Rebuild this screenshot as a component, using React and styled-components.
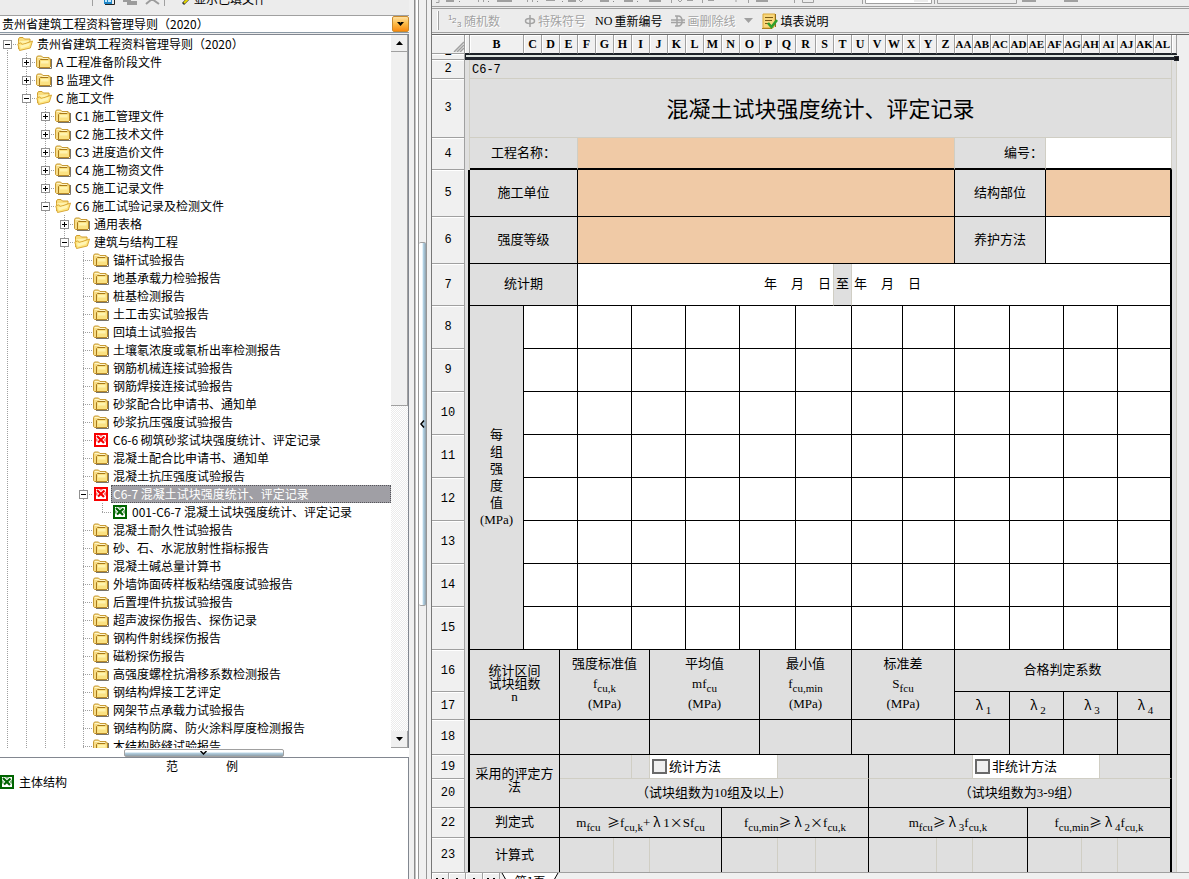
import React, { useState } from 'react'
import styled, { createGlobalStyle, css } from 'styled-components'

const GlobalStyle = createGlobalStyle`
  * { box-sizing: border-box; }
  body {
    margin: 0;
    background-color: #ececec;
    color: #000;
    font: 12px/18px "Noto Sans CJK SC", "Noto Sans", sans-serif;
  }
  button, select, input { font: inherit; color: inherit; margin: 0; padding: 0; border: 0; background: none; }
`;

const App_ = styled.div`
  display: flex;
  height: 100vh;
  overflow: hidden;
`;

const Side = styled.aside`
  flex: none;
  width: 409px;
  display: flex;
  flex-direction: column;
`;

const SideTools = styled.div`
  height: 15px;
  padding-left: 92px;
  display: flex;
  align-items: flex-start;
  overflow: hidden;
`;

const SideToolsText = styled.span`
  height: 5px;
  margin-left: 2px;
  display: flex;
  align-items: flex-end;
  overflow: hidden;
  line-height: 13px;
`;

const Combo = styled.div`
  flex: none;
  height: 18px;
  display: flex;
  background-color: #fff;
  border-top: 1px solid #a0a0a0;
  border-bottom: 1px solid #8c9aa6;
`;

const Select = styled.select`
  flex: 1;
  appearance: none;
  padding-left: 2px;
  line-height: 16px;
  outline: none;
`;

const ComboArrow = styled.span`
  width: 17px;
  display: flex;
  align-items: center;
  justify-content: center;
  border: 1px solid #c98a2c;
  border-radius: 2px;
  background: linear-gradient(#ffe0a0, #fdb944 50%, #f98a10);
`;

const TreePanel = styled.div`
  flex: 1;
  min-height: 0;
  margin-top: 1px;
  display: flex;
  background-color: #fff;
  border-top: 1px solid #828790;
  border-right: 1px solid #828790;
`;

const Tree = styled.ul`
  flex: 1;
  margin: 0;
  padding: 0;
  list-style: none;
  overflow: hidden;
`;

const TreeRow = styled.li`
  height: 18px;
  display: flex;
  align-items: stretch;
`;

const dots = '#a0a0a0 0 1px, transparent 1px 2px';

const Guide = styled.span`
  flex: none;
  width: 19px;
  background: repeating-linear-gradient(to bottom, ${dots}) 7px 0 / 1px 100% no-repeat;
`;

const Branch = styled.span`
  flex: none;
  width: 17px;
  padding-left: 3px;
  display: flex;
  align-items: center;
  background:
    repeating-linear-gradient(to bottom, ${dots}) 7px ${p => p.$first ? '9px' : '0'} / 1px ${p => p.$last ? '50%' : '100%'} no-repeat,
    repeating-linear-gradient(to right, ${dots}) 7px 9px / 10px 1px no-repeat;
`;

const Expander = styled.button`
  width: 9px;
  height: 9px;
  display: flex;
  background-color: #fff;
  border: 1px solid #919191;
`;

const Label = styled.button`
  flex: 1;
  margin-left: 2px;
  padding-left: 1px;
  text-align: left;
  line-height: 16px;
  white-space: nowrap;
  border: 1px solid transparent;
  ${p => p.$selected && css`
    color: #fff;
    background-color: #a09fa5;
    border: 1px dotted #55555a;
  `}
`;

const ScrollBar = styled.div`
  flex: none;
  width: 17px;
  display: flex;
  flex-direction: column;
  background: repeating-conic-gradient(#ebebeb 0 25%, #fff 0 50%) 0 0 / 2px 2px;
`;

const ScrollButton = styled.button`
  height: 17px;
  display: flex;
  align-items: center;
  justify-content: center;
  background-color: #f0f0f0;
  border-right: 1px solid #a0a0a0;
  border-bottom: 1px solid #a0a0a0;
`;

const Thumb = styled.div`
  flex: 0 0 354px;
  background-color: #f0f0f0;
  border-right: 1px solid #a0a0a0;
  border-bottom: 1px solid #a0a0a0;
`;

const ScrollSpace = styled.div`
  flex: 1;
`;

const HSplit = styled.div`
  flex: none;
  height: 9px;
  padding-right: 2px;
  display: flex;
  justify-content: center;
  align-items: flex-end;
  background-color: #fff;
`;

const HHandle = styled.button`
  width: 160px;
  height: 8px;
  display: flex;
  justify-content: center;
  align-items: center;
  border: 1px solid #a0a0a0;
  border-radius: 2px;
  background: linear-gradient(#fff 35%, #b4d2e4 50%, #8f9ea8);
`;

const Samples = styled.section`
  flex: none;
  height: 122px;
  background-color: #fff;
  border-top: 1px solid #828790;
  border-right: 1px solid #828790;
`;

const SamplesHead = styled.div`
  height: 16px;
  padding-right: 4px;
  line-height: 16px;
  display: flex;
  justify-content: center;
  gap: 48px;
`;

const SampleItem = styled.button`
  height: 16px;
  display: flex;
  align-items: center;
  gap: 5px;
`;

const VSplit = styled.div`
  flex: none;
  width: 22px;
  padding: 0 4px 0 5px;
  display: flex;
  background-color: #f0f0f0;
`;

const Edge = styled.span`
  width: 4px;
  border-left: 1px solid #8c8c8c;
  background: linear-gradient(to right, #c4c4c4 1px, #fff 1px);
`;

const Rail = styled.div`
  width: 10px;
  padding-bottom: 31px;
  display: flex;
  flex-direction: column;
  justify-content: center;
  border-left: 1px solid #969696;
  border-right: 1px solid #969696;
`;

const VHandle = styled.button`
  height: 43%;
  display: flex;
  align-items: center;
  justify-content: center;
  border: solid #a0a0a0;
  border-width: 1px 0;
  border-radius: 2px;
  background: linear-gradient(to right, #fff 45%, #b4d6ea 60%, #8f9ea8);
`;

const Main = styled.main`
  flex: 1;
  min-width: 0;
  display: flex;
  flex-direction: column;
  border-left: 1px solid #777;
`;

const TopStrip = styled.div`
  flex: none;
  height: 7px;
  display: flex;
  align-items: flex-start;
  overflow: hidden;
  border-bottom: 1px solid #a0a0a0;
`;

const ToolBar = styled.div`
  flex: none;
  height: 25px;
  margin-top: 1px;
  padding-left: 5px;
  display: flex;
  align-items: center;
  gap: 9px;
  white-space: nowrap;
  border-top: 1px solid #a0a0a0;
  border-bottom: 1px solid #a0a0a0;
`;

const Grip = styled.span`
  width: 2px;
  height: 19px;
  border-right: 1px solid #a0a0a0;
  background-color: #fff;
`;

const Tool = styled.button`
  display: flex;
  align-items: center;
  gap: 2px;
  margin-right: ${p => p.$wide ? '15px' : '0'};
  color: #000;
  &:disabled { color: #a3a3a3; text-shadow: 1px 1px 0 #fff; }
`;

const No = styled.span`
  font: 12px/16px "Liberation Serif", serif;
`;

const SheetArea = styled.div`
  flex: 1;
  min-height: 0;
  margin-top: 1px;
  overflow: hidden;
  background-color: #efefef;
  border-top: 1px solid #696969;
`;

const Sheet = styled.table`
  width: 745px;
  table-layout: fixed;
  border-collapse: separate;
  border-spacing: 0;
  font: 13px/13px "Liberation Serif", "Noto Sans CJK SC", serif;
`;

const lines = {
  dark: '1px solid #000',
  thick: '2px solid #000',
  light: '1px solid #d0cec4',
  none: '0',
};
const fills = { grey: '#dfdfdf', white: '#fff', orange: '#f0caa6' };

const Td = styled.td`
  padding: ${p => p.$pad || '0 0 2px'};
  text-align: ${p => p.$align || 'center'};
  vertical-align: middle;
  line-height: ${p => p.$lh || 13}px;
  background-color: ${p => fills[p.$fill || 'grey']};
  border-right: ${p => lines[p.$right || 'dark']};
  border-bottom: ${p => lines[p.$bottom || 'dark']};
`;

const ColHead = styled.th`
  height: 19px;
  padding: 0;
  font: bold ${p => p.$double ? 11 : 12}px/16px "Liberation Serif", serif;
  white-space: nowrap;
  background-color: #f0f0f0;
  border-right: 1px solid #a0a0a0;
  border-bottom: 1px solid #1d2228;
  box-shadow: inset 1px 1px 0 #fff;
`;

const RowHead = styled.th`
  height: ${p => p.$h}px;
  padding: 0;
  font: 12px/14px "Liberation Mono", monospace;
  vertical-align: middle;
  background-color: #f0f0f0;
  border-right: 1px solid #a0a0a0;
  border-bottom: 1px solid #a0a0a0;
  box-shadow: inset 0 1px 0 #fff;
`;

const Peek = styled.div`
  height: 5px;
  display: flex;
  align-items: flex-end;
  justify-content: center;
  overflow: hidden;
`;

const Band = styled.td`
  position: relative;
  padding: 0;
  background-color: #dde3df;
  border-top: 1px solid #1d2228;
  border-bottom: 3px solid #20242c;
  border-left: 1px solid #1d2228;
`;

const FillHandle = styled.span`
  position: absolute;
  right: -2px;
  bottom: -4px;
  width: 5px;
  height: 5px;
  background-color: #111;
  border: 1px solid #20242c;
`;

const Title = styled.div`
  font: 22px/30px "Noto Sans CJK SC", sans-serif;
`;

const Code = styled.span`
  font: 12px/14px "Liberation Mono", monospace;
`;

const Sub = styled.sub`
  font-size: 11px;
  line-height: 0;
`;

const Wide = styled.span`
  display: inline-block;
  width: 13px;
  text-align: center;
  font-family: "Noto Sans CJK SC", sans-serif;
`;

const DateParts = styled.div`
  display: flex;
  gap: 14px;
  justify-content: ${p => p.$end ? 'flex-end' : 'flex-start'};
`;

const Check = styled.label`
  display: flex;
  align-items: center;
  gap: 2px;
`;

const CheckBox = styled.input`
  appearance: none;
  width: 15px;
  height: 15px;
  background-color: #efefef;
  border: 2px solid #696969;
  &:checked { background-color: #696969; }
`;

const TabBar = styled.div`
  flex: none;
  height: 7px;
  display: flex;
  overflow: hidden;
  background-color: #f0f0f0;
  border-top: 1px solid #a0a0a0;
`;

const NavButton = styled.button`
  width: 17px;
  height: 17px;
  display: flex;
  justify-content: center;
  border-right: 1px solid #a0a0a0;
  box-shadow: inset 1px 1px 0 #fff;
`;

const TabEdge = styled.svg`
  flex: none;
  display: block;
`;

const Tab = styled.button`
  height: 16px;
  width: 48px;
  line-height: 14px;
  background-color: #fff;
`;

const FolderIcon = () => (
  <svg width="16" height="16" viewBox="0 0 16 16">
    <path d="M3 14.500h12.500V5" fill="none" stroke="#77736a" />
    <path d="M.5 12.500v-9l1-1.500h4l1.500 1.500h6l1 1v8l-1 1h-11.500z" fill="#f7dc86" stroke="#c79a35" />
    <path d="M2 3.500h3.500l1 1H12" stroke="#fff6c9" fill="none" />
    <path d="M4 13V6.500L5 5.500h8.500l.5 1V13z" fill="#fbe282" />
    <path d="M3.500 13V6.500l1-1h7.500l1-1" fill="none" stroke="#a8791a" />
    <path d="M5 7h7.500v2.500H5z" fill="#fff3ae" />
    <path d="M2 13.500h12M14.500 5v8" stroke="#b98a28" />
  </svg>
)

const OpenFolderIcon = () => (
  <svg width="16" height="16" viewBox="0 0 16 16">
    <path d="M1.500 13V3l1-1.500h3.500l1.500 1.500h5.500v3" fill="#f9dd7c" stroke="#d3a02c" />
    <path d="M1 6l3-1 9-.5-4 3z" fill="#fff3ae" />
    <path d="M2.500 14.500L.8 8l2.700-1 2 1.500L15.500 5l-2.200 7z" fill="#ffe67f" stroke="#d9a93a" />
    <path d="M3 9.500l10-2.500-1 3-8 2.500z" fill="#fff5b5" />
  </svg>
)

const SheetIcon = ({ color }) => (
  <svg width="14" height="14" viewBox="0 0 14 14" style={{ flexShrink: 0 }}>
    <rect width="14" height="14" fill={color} />
    <path d="M2 2h10v10H2z" fill="#fff" />
    <path d="M3 3l7 7M10.500 3.500L4 9.500" stroke={color} strokeWidth="2.200" />
    <path d="M2 5l2 2-2 2M12 4.500L9.500 7l2.500 2M5 2l2 2 2-2" fill={color} fillOpacity=".55" />
    <path d="M2 11.500h10" stroke="#fff" />
  </svg>
)

const IconBox = styled.span`
  flex: none;
  width: 16px;
  display: flex;
  align-items: center;
  justify-content: center;
`;

const TreeIcon = ({ type }) => (
  <IconBox>
    {type === 'open' && <OpenFolderIcon />}
    {type === 'folder' && <FolderIcon />}
    {type === 'red' && <SheetIcon color="#f80000" />}
    {type === 'green' && <SheetIcon color="#006400" />}
  </IconBox>
)

const Arrow = ({ d, w = 7, h = 4, color = '#000' }) => (
  <svg width={w} height={h} viewBox={`0 0 ${w} ${h}`}><path d={d} fill={color} /></svg>
)

// level, icon, text, expander sign
const tree = [
  [0, 'open', '贵州省建筑工程资料管理导则（2020）', '-'],
  [1, 'folder', 'A 工程准备阶段文件', '+'],
  [1, 'folder', 'B 监理文件', '+'],
  [1, 'open', 'C 施工文件', '-'],
  [2, 'folder', 'C1 施工管理文件', '+'],
  [2, 'folder', 'C2 施工技术文件', '+'],
  [2, 'folder', 'C3 进度造价文件', '+'],
  [2, 'folder', 'C4 施工物资文件', '+'],
  [2, 'folder', 'C5 施工记录文件', '+'],
  [2, 'open', 'C6 施工试验记录及检测文件', '-'],
  [3, 'folder', '通用表格', '+'],
  [3, 'open', '建筑与结构工程', '-'],
  [4, 'folder', '锚杆试验报告'],
  [4, 'folder', '地基承载力检验报告'],
  [4, 'folder', '桩基检测报告'],
  [4, 'folder', '土工击实试验报告'],
  [4, 'folder', '回填土试验报告'],
  [4, 'folder', '土壤氡浓度或氡析出率检测报告'],
  [4, 'folder', '钢筋机械连接试验报告'],
  [4, 'folder', '钢筋焊接连接试验报告'],
  [4, 'folder', '砂浆配合比申请书、通知单'],
  [4, 'folder', '砂浆抗压强度试验报告'],
  [4, 'red', 'C6-6 砌筑砂浆试块强度统计、评定记录'],
  [4, 'folder', '混凝土配合比申请书、通知单'],
  [4, 'folder', '混凝土抗压强度试验报告'],
  [4, 'red', 'C6-7 混凝土试块强度统计、评定记录', '-'],
  [5, 'green', '001-C6-7 混凝土试块强度统计、评定记录'],
  [4, 'folder', '混凝土耐久性试验报告'],
  [4, 'folder', '砂、石、水泥放射性指标报告'],
  [4, 'folder', '混凝土碱总量计算书'],
  [4, 'folder', '外墙饰面砖样板粘结强度试验报告'],
  [4, 'folder', '后置埋件抗拔试验报告'],
  [4, 'folder', '超声波探伤报告、探伤记录'],
  [4, 'folder', '钢构件射线探伤报告'],
  [4, 'folder', '磁粉探伤报告'],
  [4, 'folder', '高强度螺栓抗滑移系数检测报告'],
  [4, 'folder', '钢结构焊接工艺评定'],
  [4, 'folder', '网架节点承载力试验报告'],
  [4, 'folder', '钢结构防腐、防火涂料厚度检测报告'],
  [4, 'folder', '木结构胶缝试验报告'],
]

const letters = 'A B C D E F G H I J K L M N O P Q R S T U V W X Y Z AA AB AC AD AE AF AG AH AI AJ AK AL AM'.split(' ')
const narrow = { A: 5, B: 54, O: 20, R: 20, U: 17, V: 17, W: 17, X: 17, Y: 17, AC: 19, AM: 5 }

const Row = ({ n, h, framed = true, children }) => (
  <tr>
    <RowHead $h={h} scope="row">{n}</RowHead>
    <Td $right={framed ? 'thick' : 'light'} $bottom="none" />
    {children}
    <Td $right="light" $bottom="none" />
  </tr>
)

const Fcu = ({ children = 'cu,k' }) => <>f<Sub>{children}</Sub></>
const Lambda = ({ n }) => <><Wide>λ</Wide><Sub>{n}</Sub></>
const Ge = () => <Wide>≥</Wide>

const MethodCheck = ({ id, text }) => (
  <Check htmlFor={id}>
    <CheckBox type="checkbox" id={id} />
    {text}
  </Check>
)

const FormSheet = () => (
  <Sheet>
    <colgroup>
      <col width="33" />
      {letters.map(l => <col key={l} width={narrow[l] || 18} />)}
    </colgroup>
    <thead>
      <tr>
        <RowHead $h={19}>
          <svg width="32" height="16" viewBox="0 0 32 16" style={{ display: 'block' }}>
            <path d="M22 16L32 6M25 16l7-7M28 16l4-4" stroke="#a0a0a0" strokeWidth="1.500" />
          </svg>
        </RowHead>
        {letters.map(l => (
          <ColHead key={l} scope="col" $double={l.length > 1}>{l === 'A' || l === 'AM' ? '' : l}</ColHead>
        ))}
      </tr>
    </thead>
    <tbody>
      <tr>
        <RowHead $h={6} scope="row"><Peek>1</Peek></RowHead>
        <Band colSpan={39}><FillHandle /></Band>
      </tr>
      <Row n={2} h={19} framed={false}>
        <Td colSpan={37} $align="left" $pad="0 2px" $right="light" $bottom="light"><Code>C6-7</Code></Td>
      </Row>
      <Row n={3} h={59} framed={false}>
        <Td colSpan={37} $right="light" $bottom="light"><Title>混凝土试块强度统计、评定记录</Title></Td>
      </Row>
      <Row n={4} h={32} framed={false}>
        <Td colSpan={4} $right="light" $bottom="thick">工程名称：</Td>
        <Td colSpan={21} $fill="orange" $right="light" $bottom="thick" />
        <Td colSpan={5} $align="right" $pad="0 2px 2px" $right="light" $bottom="thick">编号：</Td>
        <Td colSpan={7} $fill="white" $right="light" $bottom="thick" />
      </Row>
      <Row n={5} h={47}>
        <Td colSpan={4}>施工单位</Td>
        <Td colSpan={21} $fill="orange" />
        <Td colSpan={5}>结构部位</Td>
        <Td colSpan={7} $fill="orange" $right="thick" />
      </Row>
      <Row n={6} h={47}>
        <Td colSpan={4}>强度等级</Td>
        <Td colSpan={21} $fill="orange" />
        <Td colSpan={5}>养护方法</Td>
        <Td colSpan={7} $fill="white" $right="thick" />
      </Row>
      <Row n={7} h={42}>
        <Td colSpan={4}>统计期</Td>
        <Td colSpan={14} $fill="white" $right="light" $pad="0 2px 2px">
          <DateParts $end><span>年</span><span>月</span><span>日</span></DateParts>
        </Td>
        <Td $right="light">至</Td>
        <Td colSpan={18} $fill="white" $right="thick" $pad="0 2px 2px">
          <DateParts><span>年</span><span>月</span><span>日</span></DateParts>
        </Td>
      </Row>
      {[8, 9, 10, 11, 12, 13, 14, 15].map(n => (
        <Row key={n} n={n} h={43}>
          {n === 8 && <Td rowSpan={8} $lh={17}>每<br />组<br />强<br />度<br />值<br />(MPa)</Td>}
          {Array.from({ length: 12 }, (_, i) => (
            <Td key={i} colSpan={3} $fill="white" $right={i === 11 ? 'thick' : 'dark'} />
          ))}
        </Row>
      ))}
      <Row n={16} h={42}>
        <Td colSpan={3} rowSpan={2}>统计区间<br />试块组数<br />n</Td>
        <Td colSpan={5} rowSpan={2} $lh={20}>强度标准值<br /><Fcu /><br />(MPa)</Td>
        <Td colSpan={6} rowSpan={2} $lh={20}>平均值<br />m<Fcu>cu</Fcu><br />(MPa)</Td>
        <Td colSpan={5} rowSpan={2} $lh={20}>最小值<br /><Fcu>cu,min</Fcu><br />(MPa)</Td>
        <Td colSpan={6} rowSpan={2} $lh={20}>标准差<br />S<Sub>fcu</Sub><br />(MPa)</Td>
        <Td colSpan={12} $right="thick">合格判定系数</Td>
      </Row>
      <Row n={17} h={28}>
        {[1, 2, 3, 4].map(i => (
          <Td key={i} colSpan={3} $right={i === 4 ? 'thick' : 'dark'}><Lambda n={i} /></Td>
        ))}
      </Row>
      <Row n={18} h={35}>
        {[3, 5, 6, 5, 6, 3, 3, 3].map((s, i) => <Td key={i} colSpan={s} />)}
        <Td colSpan={3} $right="thick" />
      </Row>
      <Row n={19} h={24}>
        <Td colSpan={3} rowSpan={2}>采用的评定方法</Td>
        <Td colSpan={4} $right="light" $bottom="light" />
        <Td $right="light" $bottom="light" />
        <Td colSpan={7} $fill="white" $right="light" $bottom="light" $pad="0 2px">
          <MethodCheck id="stat" text="统计方法" />
        </Td>
        <Td colSpan={5} $bottom="light" />
        <Td colSpan={6} $right="light" $bottom="light" />
        <Td colSpan={7} $fill="white" $right="light" $bottom="light" $pad="0 2px">
          <MethodCheck id="nonstat" text="非统计方法" />
        </Td>
        <Td colSpan={4} $right="thick" $bottom="light" />
      </Row>
      <Row n={20} h={29}>
        <Td colSpan={17}>（试块组数为10组及以上）</Td>
        <Td colSpan={17} $right="thick">（试块组数为3-9组）</Td>
      </Row>
      <Row n={22} h={30}>
        <Td colSpan={3}>判定式</Td>
        <Td colSpan={9}>m<Sub>fcu</Sub>&nbsp; <Ge /><Fcu />+<Wide>λ</Wide>1<Wide>×</Wide>S<Fcu>cu</Fcu></Td>
        <Td colSpan={8}><Fcu>cu,min</Fcu><Ge /><Lambda n={2} /><Wide>×</Wide><Fcu /></Td>
        <Td colSpan={9}>m<Sub>fcu</Sub><Ge /><Lambda n={3} /><Fcu /></Td>
        <Td colSpan={8} $right="thick"><Fcu>cu,min</Fcu><Ge /><Lambda n={4} /><Fcu /></Td>
      </Row>
      <Row n={23} h={35}>
        <Td colSpan={3}>计算式</Td>
        {[[3, 2, 4], [3, 2, 3], [4, 2, 3], [3, 2, 3]].map((group, g) => group.map((s, i) => (
          <Td key={`${g}-${i}`} colSpan={s} $right={i < 2 ? 'light' : g === 3 ? 'thick' : 'dark'} />
        )))}
      </Row>
    </tbody>
  </Sheet>
)

const App = () => {
  const [selected, setSelected] = useState(25)

  return (
    <>
      <GlobalStyle />
      <App_>
        <Side>
          <SideTools>
            <svg width="100" height="6" viewBox="0 0 100 6">
              <path d="M.5 0v6M72.500 0v6" stroke="#a0a0a0" />
              <path d="M12 0h8v4h-8z" fill="#1f86c7" />
              <path d="M13 0h2v2h-2zM16 0h3v2h-3z" fill="#bfe9ff" />
              <path d="M22.500 0v4.500H13" stroke="#222" fill="none" />
              <path d="M31 0h8v2h-8zM35 1h10v4H35z" fill="#9c9c9c" />
              <path d="M54 4l6-5 7 5" stroke="#9c9c9c" strokeWidth="2" fill="none" />
              <path d="M91 4l5-5" stroke="#333" strokeWidth="3" />
              <path d="M92 3l4-4" stroke="#e8d800" strokeWidth="2" />
            </svg>
            <SideToolsText>显示已填文件</SideToolsText>
          </SideTools>
          <Combo>
            <Select aria-label="资料库">
              <option>贵州省建筑工程资料管理导则（2020）</option>
            </Select>
            <ComboArrow><Arrow d="M0 0h3l.5 1 .5-1h3L3.500 4z" /></ComboArrow>
          </Combo>
          <TreePanel>
            <Tree>
              {tree.map(([level, icon, text, sign], i) => (
                <TreeRow key={i}>
                  {Array.from({ length: level }, (_, g) => <Guide key={g} />)}
                  <Branch $first={level === 0} $last={level === 5}>
                    {sign && (
                      <Expander aria-label={sign === '+' ? '展开' : '折叠'}>
                        <svg width="7" height="7" viewBox="0 0 7 7">
                          <path d={sign === '+' ? 'M1 3.500h5M3.500 1v5' : 'M1 3.500h5'} stroke="#000" />
                        </svg>
                      </Expander>
                    )}
                  </Branch>
                  <TreeIcon type={icon} />
                  <Label $selected={selected === i} onClick={() => setSelected(i)}>{text}</Label>
                </TreeRow>
              ))}
            </Tree>
            <ScrollBar>
              <ScrollButton aria-label="向上"><Arrow d="M0 4h7L3.500 0z" /></ScrollButton>
              <Thumb />
              <ScrollSpace />
              <ScrollButton aria-label="向下"><Arrow d="M0 0h7L3.500 4z" /></ScrollButton>
            </ScrollBar>
          </TreePanel>
          <HSplit>
            <HHandle aria-label="收起范例">
              <svg width="7" height="4" viewBox="0 0 7 4"><path d="M.5 0l3 3 3-3" stroke="#000" strokeWidth="1.500" fill="none" /></svg>
            </HHandle>
          </HSplit>
          <Samples>
            <SamplesHead><span>范</span><span>例</span></SamplesHead>
            <SampleItem><SheetIcon color="#006400" />主体结构</SampleItem>
          </Samples>
        </Side>

        <VSplit>
          <Edge />
          <Rail>
            <VHandle aria-label="收起目录">
              <svg width="5" height="8" viewBox="0 0 5 8"><path d="M4 .5L1 4l3 3.500" stroke="#000" strokeWidth="1.500" fill="none" /></svg>
            </VHandle>
          </Rail>
        </VSplit>

        <Main>
          <TopStrip>
            <svg width="680" height="6" viewBox="0 0 680 6">
              <path d="M14 0h8v2h-8zM65 0h15v2H65zM136 0h8v2h-8zM168 0h9v2h-9zM192 0h9v2h-9zM217 0h12v2h-12zM324 0h12v2h-12zM590 0h14v2h-14zM632 0h14v2h-14z" fill="#a0a0a0" />
              <path d="M46.500 0v2M51.500 0v2M95.500 0v2M100.500 0v2M114 .5h9M147 0l2 2 2-2M246 0l2 2 2-2M255 .5h6M276 .5h6M304 0v2" stroke="#a0a0a0" fill="none" />
              <path d="M27 1h1v1h-1zM56 1h1v1h-1zM105 1h1v1h-1zM130 1h1v1h-1zM181 1h1v1h-1zM205 1h1v1h-1z" fill="#888" />
              <path d="M4 2.500h3V0M239.500 0v3M270.500 0v3M316.500 0v3M362.500 0v3M370.500 0v2.500h11V0M430.500 0v4M502.500 0v4" stroke="#a0a0a0" fill="none" />
              <path d="M433.500 0v3.500h66V0" stroke="#a0a0a0" fill="#fff" />
              <path d="M482 0h14v2h-14z" fill="#ececec" />
              <path d="M505.500 0v3.500h79V0" stroke="#a0a0a0" fill="none" />
            </svg>
          </TopStrip>
          <ToolBar>
            <Grip />
            <Tool disabled $wide>
              <svg width="14" height="14" viewBox="0 0 14 14" fill="#8f8f8f" fontFamily="Liberation Sans" fontSize="8">
                <text x="0" y="6">1</text>
                <text x="4" y="9">2</text>
                <text x="9" y="13">3</text>
              </svg>
              随机数
            </Tool>
            <Tool disabled>
              <svg width="12" height="12" viewBox="0 0 12 12" fill="none" stroke="#a3a3a3" strokeWidth="1.500">
                <path d="M6 0v12" />
                <ellipse cx="6" cy="6" rx="4.500" ry="2.500" />
              </svg>
              特殊符号
            </Tool>
            <Tool><No>NO</No>重新编号</Tool>
            <Tool disabled>
              <svg width="14" height="12" viewBox="0 0 14 12" fill="none" stroke="#a3a3a3" strokeWidth="1.500">
                <path d="M4 1h3q4 0 4 5t-4 5H4M6 1v10M0 5h14M0 7.500h14" />
              </svg>
              画删除线
            </Tool>
            <Tool disabled aria-label="更多"><Arrow w={9} h={5} d="M0 0h9L4.500 5z" color="#a0a0a0" /></Tool>
            <Tool>
              <svg width="16" height="16" viewBox="0 0 16 16">
                <path d="M1 1h12v11l-2 3H1z" fill="#f8d77c" stroke="#dba936" />
                <path d="M13.500 1v13" stroke="#8e6a1a" />
                <path d="M0 15.500h10" stroke="#b0801e" />
                <path d="M3 4.500h8M3 7.500h7M3 10.500h3" stroke="#7b5a14" />
                <path d="M6 10l3.500 4L15 7" fill="none" stroke="#2fa02c" strokeWidth="2.600" />
              </svg>
              填表说明
            </Tool>
          </ToolBar>
          <SheetArea>
            <FormSheet />
          </SheetArea>
          <TabBar>
            {['首页', '上一页', '下一页', '末页'].map((name, i) => (
              <NavButton key={name} aria-label={name}>
                <svg width="10" height="6" viewBox="0 0 10 6">
                  <path d={i === 1 || i === 2 ? 'M4 5h2v1H4z' : 'M1 5h2v1H1zM7 5h2v1H7z'} fill="#000" />
                </svg>
              </NavButton>
            ))}
            <TabEdge width="6" height="7" viewBox="0 0 6 7">
              <path d="M2 0l4 7V0z" fill="#fff" />
              <path d="M2 0l4 7" stroke="#000" />
            </TabEdge>
            <Tab>第1页</Tab>
            <TabEdge width="6" height="7" viewBox="0 0 6 7">
              <path d="M4 0L0 7V0z" fill="#fff" />
              <path d="M4 0L0 7" stroke="#000" />
            </TabEdge>
          </TabBar>
        </Main>
      </App_>
    </>
  )
}

export default App
